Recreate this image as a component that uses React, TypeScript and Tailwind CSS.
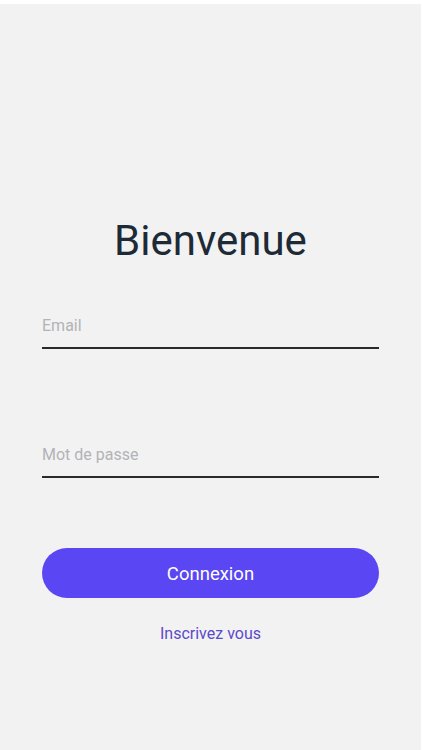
export default function App() {
  return (
    <div className="w-[422px] h-[750px] bg-white pt-[4px] pr-[1px]" style={{ fontFamily: 'Roboto, "Noto Sans", sans-serif' }}>
      <div className="h-full bg-[#f2f2f3] flex flex-col items-stretch px-[42px]">
        <h1 className="mt-[211px] text-center text-[42px] leading-[52px] text-[#1e2a36] font-normal">Bienvenue</h1>
        <div className="mt-[49px]">
          <div className="text-[16px] leading-[20px] text-[#b3b3b6] pb-[11px]">Email</div>
          <div className="h-[2px] bg-[#2a2a2d]" />
        </div>
        <div className="mt-[96px]">
          <div className="text-[16px] leading-[20px] text-[#b3b3b6] pb-[11px]">Mot de passe</div>
          <div className="h-[2px] bg-[#2a2a2d]" />
        </div>
        <button className="mt-[70px] h-[50px] pt-[3px] rounded-full bg-[#5a46f2] text-white text-[18.5px]">Connexion</button>
        <div className="mt-[26px] text-center text-[16px] leading-[20px] text-[#5b4bc9]">Inscrivez vous</div>
      </div>
    </div>
  );
}
